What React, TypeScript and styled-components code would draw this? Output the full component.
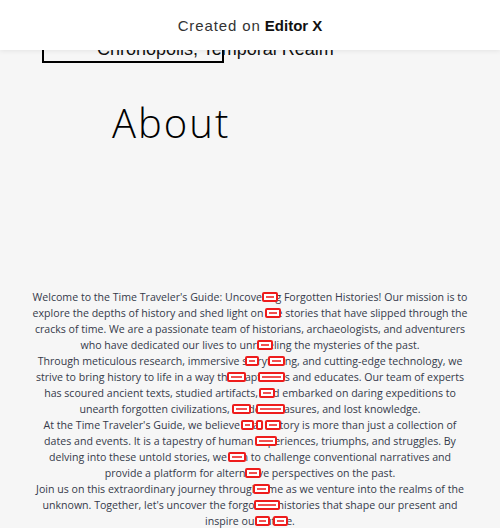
import React from "react";
import styled, { createGlobalStyle } from "styled-components";

const Global = createGlobalStyle`
  html, body { margin: 0; padding: 0; }
  body {
    background: #f6f6f6;
    font-family: "Open Sans", "Liberation Sans", sans-serif;
    width: 500px;
    height: 528px;
    overflow: hidden;
  }
`;

const Page = styled.div`
  position: relative;
  width: 500px;
  height: 528px;
  overflow: hidden;
`;

const TopBar = styled.div`
  position: absolute;
  top: 0;
  left: 0;
  right: 0;
  height: 50px;
  background: #ffffff;
  box-shadow: 0 1px 5px rgba(0, 0, 0, 0.08);
  display: flex;
  align-items: center;
  justify-content: center;
  z-index: 5;
  font-family: "Liberation Sans", Arial, sans-serif;
  font-size: 15px;
  color: #222;
`;

const Created = styled.span`
  letter-spacing: 0.9px;
  font-weight: 400;
  color: #333;
`;

const Brand = styled.span`
  margin-left: 4px;
  font-weight: 700;
  color: #111;
`;

const Content = styled.div`
  display: flex;
  flex-direction: column;
`;

const LocationBox = styled.div`
  margin: 19px 0 0 42px;
  width: 178px;
  height: 40px;
  border: 2px solid #000;
  display: flex;
  align-items: flex-end;
`;

const LocationText = styled.span`
  white-space: nowrap;
  padding-left: 53px;
  font-family: "Liberation Sans", Arial, sans-serif;
  font-size: 18px;
  line-height: 24px;
  margin-bottom: 0px;
  color: #111;
`;

const Heading = styled.h1`
  margin: 34px 0 0 112px;
  font-weight: 300;
  font-size: 40px;
  letter-spacing: 2px;
  line-height: 52px;
  color: #000;
`;

const TextWrap = styled.div`
  position: relative;
  margin-top: 140px;
`;

const Body = styled.p`
  margin: 0;
  text-align: center;
  font-size: 10.6px;
  line-height: 16px;
  color: #353a4a;
  white-space: nowrap;
`;

const Mark = styled.span`
  position: absolute;
  height: 6px;
  border: 2px solid #ee1c1c;
  border-radius: 2px;
  background: #fff;
  &::after {
    content: "";
    position: absolute;
    left: 2px;
    right: 2px;
    top: 2px;
    height: 2px;
    background: #f25050;
  }
`;

const lines = [
  "Welcome to the Time Traveler's Guide: Uncovering Forgotten Histories! Our mission is to",
  "explore the depths of history and shed light on the stories that have slipped through the",
  "cracks of time. We are a passionate team of historians, archaeologists, and adventurers",
  "who have dedicated our lives to unraveling the mysteries of the past.",
  "Through meticulous research, immersive storytelling, and cutting-edge technology, we",
  "strive to bring history to life in a way that captivates and educates. Our team of experts",
  "has scoured ancient texts, studied artifacts, and embarked on daring expeditions to",
  "unearth forgotten civilizations, hidden treasures, and lost knowledge.",
  "At the Time Traveler's Guide, we believe that history is more than just a collection of",
  "dates and events. It is a tapestry of human experiences, triumphs, and struggles. By",
  "delving into these untold stories, we aim to challenge conventional narratives and",
  "provide a platform for alternative perspectives on the past.",
  "Join us on this extraordinary journey through time as we venture into the realms of the",
  "unknown. Together, let's uncover the forgotten histories that shape our present and",
  "inspire our future.",
];

// [left, line index, width]
const marks: [number, number, number][] = [
  [262, 0, 16],
  [265, 1, 16],
  [257, 3, 16],
  [245, 4, 14],
  [268, 4, 17],
  [227, 5, 19],
  [258, 5, 27],
  [259, 6, 16],
  [232, 7, 19],
  [256, 7, 29],
  [241, 8, 13],
  [256, 8, 7],
  [265, 8, 16],
  [255, 9, 22],
  [228, 10, 18],
  [245, 11, 16],
  [253, 12, 17],
  [254, 13, 26],
  [255, 14, 15],
  [273, 14, 15],
];

export default function App() {
  return (
    <>
      <Global />
      <Page>
        <TopBar>
          <Created>Created on</Created>
          <Brand>Editor X</Brand>
        </TopBar>
        <Content>
          <LocationBox>
            <LocationText>Chronopolis, Temporal Realm</LocationText>
          </LocationBox>
          <Heading>About</Heading>
          <TextWrap>
            <Body>
              {lines.map((l, i) => (
                <React.Fragment key={i}>
                  {l}
                  {i < lines.length - 1 && <br />}
                </React.Fragment>
              ))}
            </Body>
            {marks.map(([x, li, w], i) => (
              <Mark key={i} style={{ left: x, top: li * 16 + 3, width: w - 4 }} />
            ))}
          </TextWrap>
        </Content>
      </Page>
    </>
  );
}
